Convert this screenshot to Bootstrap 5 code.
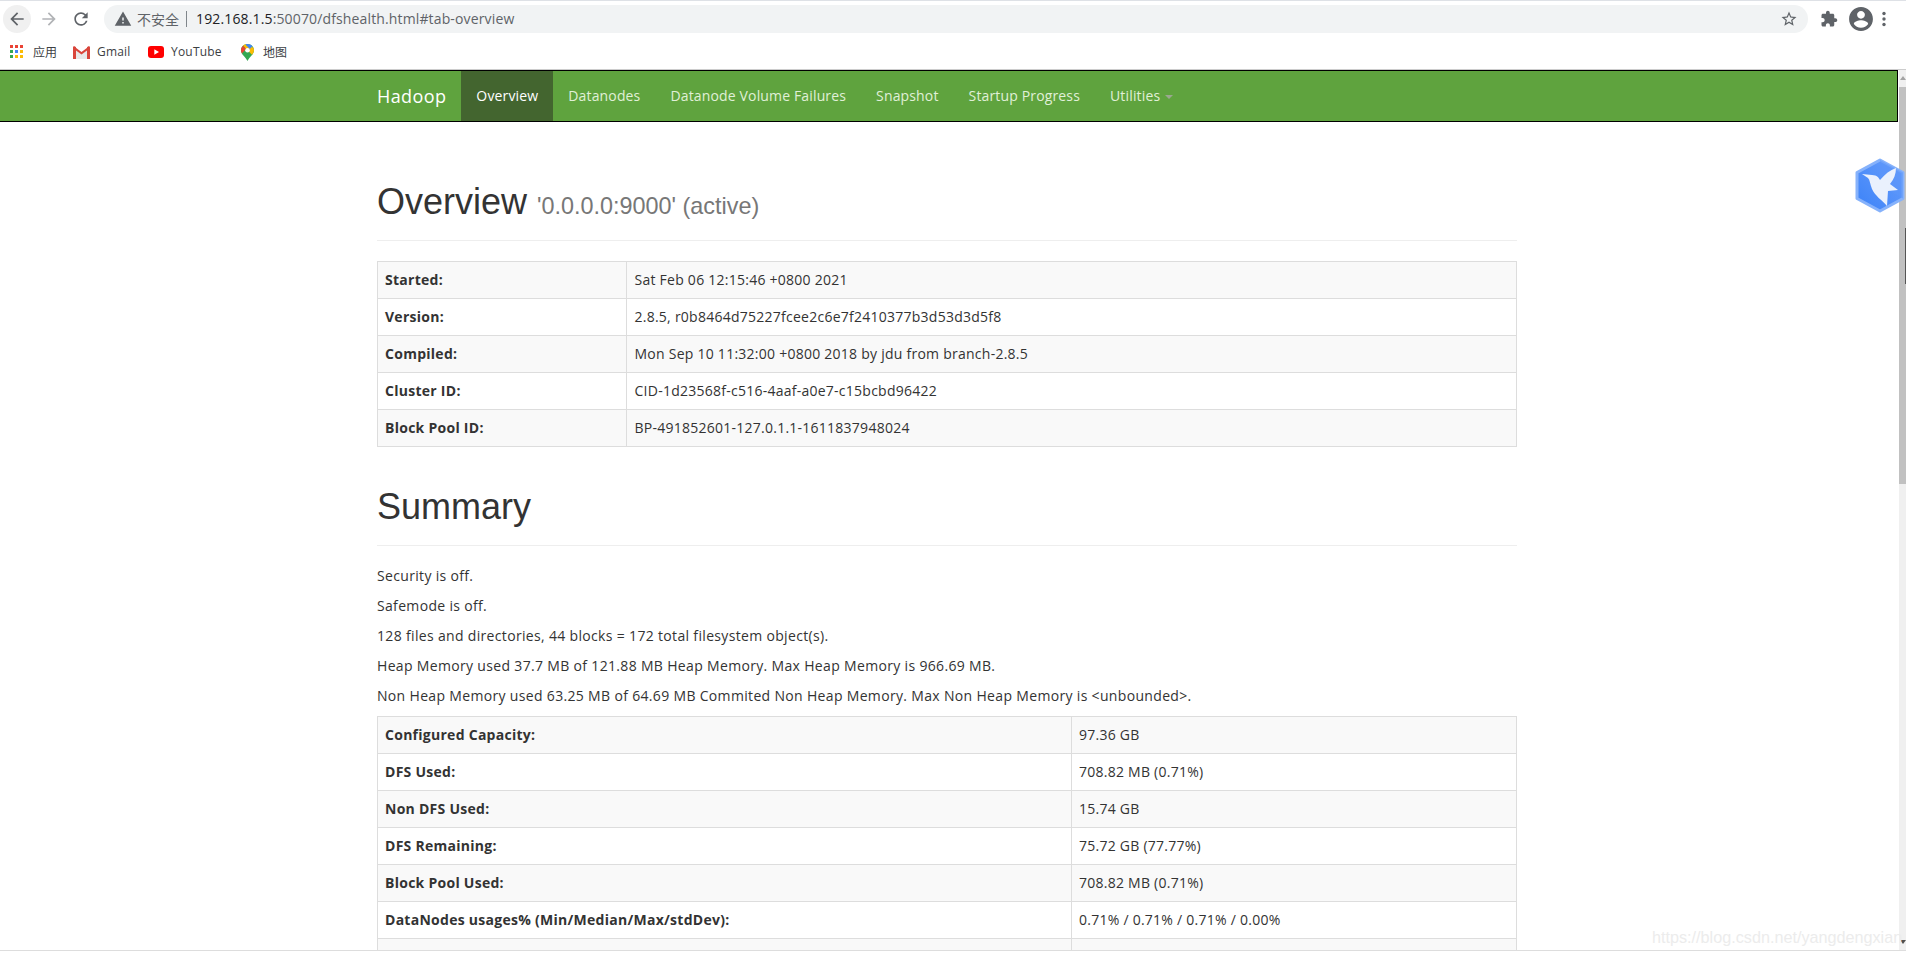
<!DOCTYPE html>
<html lang="en">
<head>
<meta charset="utf-8">
<title>Namenode information</title>
<link rel="stylesheet" href="https://cdn.jsdelivr.net/npm/bootstrap@5.3.0/dist/css/bootstrap.min.css">
<style>
html,body{height:955px;overflow:hidden;background:#fff}
body{font-family:"Open Sans","Noto Sans CJK SC",sans-serif;font-size:14px;line-height:20px;color:#333}
.screen{position:relative;width:1906px;height:955px;overflow:hidden}
.toolbar{height:35px;border-top:1px solid #dee1e6;padding-top:4px}
.tool-slot{width:32px;height:28px;flex:none}
.tool-slot.first{width:28px;margin-left:3px;margin-right:2px;border-radius:50%;background:#f0f0f0}
.tool-slot.after-forward{margin-right:6px}
.omnibox{width:1704px;height:28px;margin-left:1px;border-radius:14px;background:#f1f3f4;padding:0 10px 0 10px;color:#5f6368}
.omni-warn{font-size:14px;margin-left:5px;color:#5f6368;font-family:"Noto Sans CJK SC",sans-serif}
.omni-div{width:1px;height:16px;background:#80868b;margin:0 9px 0 7px}
.omni-url{font-size:14px;color:#5f6368;white-space:nowrap;letter-spacing:.14px}
.omni-host{color:#202124}
.tool-right{margin-left:12px}
.avatar-gap{margin-left:10px}
.bookmarks{height:35px;padding-left:10px;font-size:12px;color:#3c4043;border-bottom:1px solid #ccc}
.mark-item{white-space:nowrap;letter-spacing:.2px}
.mark-item.m1{width:63px}
.mark-item.m2{width:75px}
.mark-item.m3{width:93px}
.mark-item svg{margin-right:7px;flex:none}
.mark-cjk{font-family:"Noto Sans CJK SC",sans-serif;letter-spacing:0}
.viewport{height:881px;border-bottom:1px solid #ddd;overflow:hidden}
.page-area{width:1899px;flex:none;overflow:hidden}
.hd-navbar{height:52px;margin-right:1px;background:#5fa33e;border:1px solid #000;border-left:0;padding:0}
.hd-inner{width:1140px;margin-left:377px}
.hd-brand{font-size:18px;color:#fff;line-height:50px;padding-right:15px;text-decoration:none;letter-spacing:.4px}
.hd-link{display:block;color:#e0f0d8;padding:0 15px;line-height:50px;text-decoration:none;font-size:14px;letter-spacing:.15px}
.hd-link.active{background:#43652f;color:#fff}
.hd-caret{display:inline-block;margin-left:5px;vertical-align:middle;border-top:4px solid #9aa88f;border-left:4px solid transparent;border-right:4px solid transparent}
.hd-content{width:1140px;margin-left:377px}
.hd-head{border-bottom:1px solid #eee;padding-bottom:9px;margin-bottom:20px}
.hd-head h1{font-family:"Liberation Sans",Arial,sans-serif;font-size:36px;line-height:39.6px;font-weight:500;margin:0 0 10px;color:#333}
.hd-head h1 small{font-size:65%;color:#777;font-weight:400;line-height:1}
.first-head{margin-top:60px;padding-bottom:8px}
.next-head{margin-top:40px}
.hd-content p{margin:0 0 10px;letter-spacing:.33px}
.hd-table{table-layout:fixed;margin-bottom:20px;color:#333;--bs-table-color:#333;--bs-table-striped-color:#333;--bs-table-striped-bg:#f9f9f9;--bs-table-border-color:#ddd;--bs-table-bg:transparent;border-color:#ddd}
.hd-table th,.hd-table td{padding:8px 7px;line-height:20px;border-color:#ddd;font-size:14px}
.hd-table th{font-weight:700;letter-spacing:.27px}
.hd-table td{letter-spacing:.25px;padding-left:7.5px}
.w-a{width:249px}
.w-b{width:693.5px}
.fake-scroll{width:7px;flex:none;margin-left:0;background:#f0f0f0;position:relative}
.scroll-thumb{height:397px;margin-top:17px;background:#c1c1c1}
.scroll-up{position:absolute;top:6px;left:1px;border-bottom:4px solid #a3a3a3;border-left:3px solid transparent;border-right:3px solid transparent}
.scroll-down{position:absolute;bottom:6px;left:1px;border-top:4px solid #505050;border-left:3px solid transparent;border-right:3px solid transparent}
.scroll-mark{position:absolute;top:158px;right:0;width:1px;height:56px;background:#555}
.bird{position:absolute;left:1855px;top:158px;width:50px;height:55px}
.watermark{position:absolute;left:1652px;top:927px;font-family:"Liberation Sans",Arial,sans-serif;font-size:16.2px;line-height:20px;color:#ececec;white-space:nowrap}
</style>
</head>
<body>
<div class="screen">
  <div class="toolbar d-flex align-items-start bg-white">
    <div class="tool-slot first d-flex align-items-center justify-content-center">
      <svg width="20" height="20" viewBox="0 0 24 24" fill="#5f6368"><path d="M20 11H7.83l5.59-5.59L12 4l-8 8 8 8 1.41-1.41L7.83 13H20v-2z"/></svg>
    </div>
    <div class="tool-slot d-flex align-items-center justify-content-center">
      <svg width="20" height="20" viewBox="0 0 24 24" fill="#b1b3b6"><path d="M4 11h12.17l-5.59-5.59L12 4l8 8-8 8-1.41-1.41L16.17 13H4v-2z"/></svg>
    </div>
    <div class="tool-slot after-forward d-flex align-items-center justify-content-center">
      <svg width="20" height="20" viewBox="0 0 24 24" fill="#5f6368"><path d="M17.65 6.35A7.958 7.958 0 0 0 12 4c-4.42 0-7.99 3.58-7.99 8s3.57 8 7.99 8c3.73 0 6.84-2.55 7.73-6h-2.08A5.99 5.99 0 0 1 12 18c-3.31 0-6-2.69-6-6s2.69-6 6-6c1.66 0 3.14.69 4.22 1.78L13 11h7V4l-2.35 2.35z"/></svg>
    </div>
    <div class="omnibox d-flex align-items-center">
      <svg width="18" height="18" viewBox="0 0 24 24" fill="#5f6368"><path d="M1 21h22L12 2 1 21zm12-3h-2v-2h2v2zm0-4h-2v-4h2v4z"/></svg>
      <span class="omni-warn">不安全</span>
      <span class="omni-div"></span>
      <span class="omni-url"><span class="omni-host">192.168.1.5</span>:50070/dfshealth.html#tab-overview</span>
      <svg class="ms-auto" width="18" height="18" viewBox="0 0 24 24" fill="#5f6368"><path d="M22 9.24l-7.19-.62L12 2 9.19 8.63 2 9.24l5.46 4.73L5.82 21 12 17.27 18.18 21l-1.63-7.03L22 9.24zM12 15.4l-3.76 2.27 1-4.28-3.32-2.88 4.38-.38L12 6.1l1.71 4.04 4.38.38-3.32 2.88 1 4.28L12 15.4z"/></svg>
    </div>
    <div class="tool-right d-flex align-items-center" style="height:28px">
      <svg width="18" height="18" viewBox="0 0 24 24" fill="#5f6368"><path d="M20.5 11H19V7c0-1.1-.9-2-2-2h-4V3.5C13 2.12 11.88 1 10.5 1S8 2.12 8 3.5V5H4c-1.1 0-1.99.9-1.99 2v3.8H3.5c1.49 0 2.7 1.21 2.7 2.7s-1.21 2.7-2.7 2.7H2V20c0 1.1.9 2 2 2h3.8v-1.5c0-1.49 1.21-2.7 2.7-2.7 1.49 0 2.7 1.21 2.7 2.7V22H17c1.1 0 2-.9 2-2v-4h1.5c1.38 0 2.5-1.12 2.5-2.5S21.88 11 20.5 11z"/></svg>
      <svg class="avatar-gap" width="26" height="26" viewBox="0 0 24 24" fill="#5f6368"><path d="M12 1C5.9 1 1 5.9 1 12s4.9 11 11 11 11-4.9 11-11S18.1 1 12 1zm0 3.5c2 0 3.6 1.6 3.6 3.6S14 11.700 12 11.700 8.400 10.100 8.400 8.100 10 4.500 12 4.500zm0 15.600c-2.800 0-5.200-1.400-6.600-3.500.030-2.200 4.400-3.400 6.600-3.400s6.570 1.200 6.600 3.400c-1.400 2.100-3.800 3.500-6.600 3.500z"/></svg>
      <svg class="ms-1" width="12" height="18" viewBox="0 0 12 18" fill="#5f6368"><circle cx="6" cy="3.500" r="1.700"/><circle cx="6" cy="9" r="1.700"/><circle cx="6" cy="14.500" r="1.700"/></svg>
    </div>
  </div>
  <div class="bookmarks d-flex align-items-center bg-white">
    <div class="mark-item m1 d-flex align-items-center">
      <svg width="14" height="14" viewBox="0 0 14 14" style="margin-right:9px"><rect x="0" y="0" width="3" height="3" fill="#ea4335"/><rect x="5" y="0" width="3" height="3" fill="#ea4335"/><rect x="10" y="0" width="3" height="3" fill="#ea4335"/><rect x="0" y="5" width="3" height="3" fill="#34a853"/><rect x="5" y="5" width="3" height="3" fill="#4285f4"/><rect x="10" y="5" width="3" height="3" fill="#fbbc05"/><rect x="0" y="10" width="3" height="3" fill="#34a853"/><rect x="5" y="10" width="3" height="3" fill="#fbbc05"/><rect x="10" y="10" width="3" height="3" fill="#fbbc05"/></svg>
      <span class="mark-cjk">应用</span>
    </div>
    <div class="mark-item m2 d-flex align-items-center">
      <svg width="17" height="13" viewBox="0 0 17 13"><path d="M0 1.500 8.500 7.500 17 1.500V13H0z" fill="#e8e8e8"/><path d="M0 13V1.500C0 .5 1 0 2 .5L3 1.200V13zM17 13V1.500C17 .5 16 0 15 .5L14 1.200V13z" fill="#d9453b"/><path d="M1.500.7 8.500 6 15.500.7 14 4.500 8.500 8.500 3 4.500z" fill="#d9453b"/></svg>
      <span>Gmail</span>
    </div>
    <div class="mark-item m3 d-flex align-items-center">
      <svg width="16" height="12" viewBox="0 0 16 12"><rect width="16" height="12" rx="3" fill="#f00"/><path d="M6.300 3.300v5.400L11 6z" fill="#fff"/></svg>
      <span>YouTube</span>
    </div>
    <div class="mark-item d-flex align-items-center">
      <svg width="13" height="17" viewBox="0 0 13 17" style="margin-right:9px"><path d="M6.500 0C3 0 0 2.800 0 6.300c0 4.200 4.300 6.500 6.500 10.700C8.700 12.800 13 10.500 13 6.300 13 2.800 10 0 6.500 0z" fill="#34a853"/><path d="M2 1.800 11 10.800c1-1.300 2-2.700 2-4.500 0-.9-.2-1.800-.6-2.500L9 2 6.500 0C4.700 0 3.100.7 2 1.800z" fill="#fbbc05"/><path d="M6.500 0C8.400 0 10.200.9 11.400 2.200L8.800 5 4.800 1 4.800.3C5.300.1 5.900 0 6.500 0z" fill="#4285f4"/><path d="M2 1.800C.8 3 0 4.600 0 6.300c0 1.200.4 2.300.9 3.200L5 5z" fill="#ea4335"/><circle cx="6.500" cy="6.300" r="2.300" fill="#fff"/></svg>
      <span class="mark-cjk">地图</span>
    </div>
  </div>
  <div class="viewport d-flex">
    <div class="page-area">
      <nav class="hd-navbar">
        <div class="hd-inner d-flex align-items-start">
          <a class="hd-brand" href="#">Hadoop</a>
          <ul class="list-unstyled d-flex m-0">
            <li><a class="hd-link active" href="#">Overview</a></li>
            <li><a class="hd-link" href="#">Datanodes</a></li>
            <li><a class="hd-link" href="#">Datanode Volume Failures</a></li>
            <li><a class="hd-link" href="#">Snapshot</a></li>
            <li><a class="hd-link" href="#">Startup Progress</a></li>
            <li><a class="hd-link" href="#">Utilities<span class="hd-caret"></span></a></li>
          </ul>
        </div>
      </nav>
      <div class="hd-content">
        <div class="hd-head first-head"><h1>Overview <small>'0.0.0.0:9000' (active)</small></h1></div>
        <table class="table table-bordered table-striped hd-table">
          <tbody>
            <tr><th class="w-a">Started:</th><td>Sat Feb 06 12:15:46 +0800 2021</td></tr>
            <tr><th>Version:</th><td>2.8.5, r0b8464d75227fcee2c6e7f2410377b3d53d3d5f8</td></tr>
            <tr><th>Compiled:</th><td>Mon Sep 10 11:32:00 +0800 2018 by jdu from branch-2.8.5</td></tr>
            <tr><th>Cluster ID:</th><td>CID-1d23568f-c516-4aaf-a0e7-c15bcbd96422</td></tr>
            <tr><th>Block Pool ID:</th><td>BP-491852601-127.0.1.1-1611837948024</td></tr>
          </tbody>
        </table>
        <div class="hd-head next-head"><h1>Summary</h1></div>
        <p>Security is off.</p>
        <p>Safemode is off.</p>
        <p>128 files and directories, 44 blocks = 172 total filesystem object(s).</p>
        <p>Heap Memory used 37.7 MB of 121.88 MB Heap Memory. Max Heap Memory is 966.69 MB.</p>
        <p>Non Heap Memory used 63.25 MB of 64.69 MB Commited Non Heap Memory. Max Non Heap Memory is &lt;unbounded&gt;.</p>
        <table class="table table-bordered table-striped hd-table">
          <tbody>
            <tr><th class="w-b">Configured Capacity:</th><td>97.36 GB</td></tr>
            <tr><th>DFS Used:</th><td>708.82 MB (0.71%)</td></tr>
            <tr><th>Non DFS Used:</th><td>15.74 GB</td></tr>
            <tr><th>DFS Remaining:</th><td>75.72 GB (77.77%)</td></tr>
            <tr><th>Block Pool Used:</th><td>708.82 MB (0.71%)</td></tr>
            <tr><th>DataNodes usages% (Min/Median/Max/stdDev):</th><td>0.71% / 0.71% / 0.71% / 0.00%</td></tr>
            <tr><th>&nbsp;</th><td>&nbsp;</td></tr>
          </tbody>
        </table>
      </div>
    </div>
    <div class="fake-scroll">
      <span class="scroll-up"></span>
      <div class="scroll-thumb"></div>
      <span class="scroll-down"></span>
      <span class="scroll-mark"></span>
    </div>
  </div>
  <svg class="bird" viewBox="0 0 50 55">
    <defs><linearGradient id="hexg" x1="0" y1="1" x2="1" y2="0"><stop offset="0" stop-color="#3b82f8"/><stop offset="1" stop-color="#6a9ffb"/></linearGradient></defs>
    <path d="M25 2 48 14.500V40.500L25 53 2 40.500V14.500z" fill="url(#hexg)" stroke="#86b2fb" stroke-width="3" stroke-linejoin="round"/>
    <path d="M25 2 48 14.500V40.500L25 27.500z" fill="#5b95fa" opacity=".55"/>
    <path d="M7 16 17 17C22 17 24 20 25 22 30 16 35 12 41 10 41 16 39 21 35 26L43 32 33 33 32 48C27 42 20 38 17 31 15 26 15 22 13 20Z" fill="#eaf1fd"/>
  </svg>
  <div class="watermark">https://blog.csdn.net/yangdengxian</div>
</div>
<script src="https://cdn.jsdelivr.net/npm/bootstrap@5.3.0/dist/js/bootstrap.bundle.min.js"></script>
</body>
</html>
